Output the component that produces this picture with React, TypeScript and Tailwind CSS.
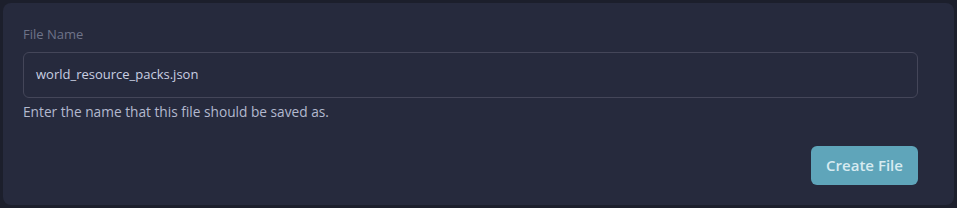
export default function App() {
    return (
        <div className="h-[208px] w-full bg-[#1c1f2c] p-[3px] font-['Open_Sans',sans-serif]">
            <div className="flex h-full flex-col rounded-lg bg-[#262a3d] pb-5 pl-5 pr-9 pt-5">
                <label className="text-[13px] leading-[22px] text-[#6e7389]">File Name</label>
                <div className="mt-[7px] flex h-[46px] items-center rounded-md border border-[#444659] bg-[#262a3d] px-3">
                    <span className="text-[13px] text-[#c9cfe2]">world_resource_packs.json</span>
                </div>
                <p className="mt-[3px] text-[13.7px] leading-[22px] text-[#b3b9cf]">
                    Enter the name that this file should be saved as.
                </p>
                <div className="mt-auto flex justify-end">
                    <button className="h-[39px] w-[107px] rounded-md bg-[#5fa5ba] text-[15px] font-semibold text-[#d7ebf1]">
                        Create File
                    </button>
                </div>
            </div>
        </div>
    );
}
